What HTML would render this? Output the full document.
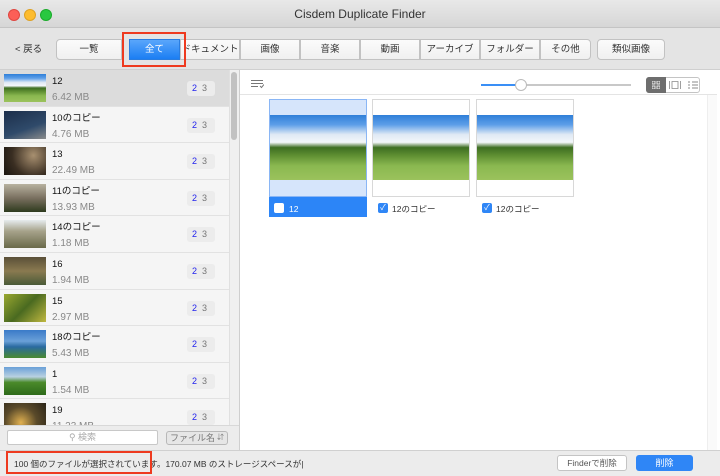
<!DOCTYPE html>
<html><head><meta charset="utf-8"><style>
*{margin:0;padding:0;box-sizing:border-box}
body{width:720px;height:476px;overflow:hidden;font-family:"Liberation Sans","Noto Sans CJK JP",sans-serif;background:#ececec;position:relative;font-size:10px;color:#222;line-height:12px}
.title{position:absolute;left:0;top:0;width:720px;height:28px;background:linear-gradient(#e8e8e8,#d6d6d6);border-bottom:1px solid #c4c4c4;text-align:center;line-height:28px;font-size:12px;color:#333}
.dot{position:absolute;top:9px;width:12px;height:12px;border-radius:6px}
.tool{position:absolute;top:28px;left:0;width:720px;height:42px;background:#e4e4e4;border-bottom:1px solid #cfcfcf}
.seg{position:absolute;top:11px;height:21px;background:linear-gradient(#fbfbfb,#f0f0f0);border:1px solid #c2c2c2;font-size:9.5px;display:flex;align-items:center;justify-content:center;white-space:nowrap;color:#333;line-height:12px}
.abs{position:absolute;white-space:nowrap}
.row{position:absolute;left:0;width:229px;height:36.6px;border-bottom:1px solid #e2e2e2;background:#f5f5f5}
.row .th{position:absolute;left:4px;top:4px;width:42px;height:28px}
.row .n{position:absolute;left:52px;top:6px;font-size:9.5px;color:#111;line-height:12px}
.row .s{position:absolute;left:52px;top:22px;font-size:10px;color:#888;line-height:12px}
.row .b{position:absolute;left:187px;top:11px;width:28px;height:15px;background:#ececec;border-radius:3px;font-size:9px;line-height:15px}
.land{background:linear-gradient(#2f7fd8 0%,#5d9ee8 15%,#dfe9f4 30%,#f3f6fa 42%,#3e6e22 50%,#5e8e32 62%,#8ab850 78%,#9bc25c 100%)}
.card{position:absolute;top:99px;width:98px;height:98px;border:1px solid #d8d8d8;background:#fff}
.card .img{position:absolute;left:0;top:15px;width:96px;height:65px}
.cb{position:absolute;width:10px;height:10px;border-radius:2px;background:#2f86f6;color:#fff;font-size:8px;line-height:10px;text-align:center}
</style></head><body>
<div class="title">Cisdem Duplicate Finder
<div class="dot" style="left:8px;background:#fc5f57;border:1px solid #df4640"></div>
<div class="dot" style="left:24px;background:#fdbc2e;border:1px solid #dea123"></div>
<div class="dot" style="left:40px;background:#29c840;border:1px solid #1aab2a"></div>
</div>
<div class="tool">
<div class="abs" style="left:15px;top:16px;font-size:9.5px;color:#333">&lt; 戻る</div>
<div class="seg" style="left:56px;width:66px;border-radius:4px 0 0 4px">一覧</div>
<div class="seg" style="left:129px;width:51px;background:linear-gradient(#5aa6fb,#1b7ef3);color:#fff;border-color:#2a7de0">全て</div>
<div class="seg" style="left:180px;width:60px">ドキュメント</div>
<div class="seg" style="left:240px;width:60px">画像</div>
<div class="seg" style="left:300px;width:60px">音楽</div>
<div class="seg" style="left:360px;width:60px">動画</div>
<div class="seg" style="left:420px;width:60px">アーカイブ</div>
<div class="seg" style="left:480px;width:60px">フォルダー</div>
<div class="seg" style="left:540px;width:51px;border-radius:0 4px 4px 0">その他</div>
<div class="seg" style="left:597px;width:68px;border-radius:4px">類似画像</div>
<div class="abs" style="left:122px;top:4px;width:64px;height:35px;border:2px solid #ee3a1f"></div>
</div>
<!-- list -->
<div class="abs" style="left:0;top:70px;width:229px;height:355px;background:#f5f5f5;overflow:hidden">
<div class="row" style="top:0;background:#dcdcdc"><div class="th land"></div><div class="n">12</div><div class="s">6.42 MB</div><div class="b"><span style="color:#2222ee;margin-left:5px">2</span><span style="color:#777;margin-left:5px">3</span></div></div>
<div class="row" style="top:36.6px"><div class="th" style="background:linear-gradient(160deg,#1c2e4a,#2f4a6a 60%,#8a8c8c)"></div><div class="n">10のコピー</div><div class="s">4.76 MB</div><div class="b"><span style="color:#2222ee;margin-left:5px">2</span><span style="color:#777;margin-left:5px">3</span></div></div>
<div class="row" style="top:73.2px"><div class="th" style="background:radial-gradient(circle at 70% 30%,#a89070,#3a2e22 60%,#1a1510)"></div><div class="n">13</div><div class="s">22.49 MB</div><div class="b"><span style="color:#2222ee;margin-left:5px">2</span><span style="color:#777;margin-left:5px">3</span></div></div>
<div class="row" style="top:109.8px"><div class="th" style="background:linear-gradient(#b8b2a0,#7a7060 50%,#2e3a1e)"></div><div class="n">11のコピー</div><div class="s">13.93 MB</div><div class="b"><span style="color:#2222ee;margin-left:5px">2</span><span style="color:#777;margin-left:5px">3</span></div></div>
<div class="row" style="top:146.4px"><div class="th" style="background:linear-gradient(#e6ebee,#a6a28a 40%,#6a6a4a)"></div><div class="n">14のコピー</div><div class="s">1.18 MB</div><div class="b"><span style="color:#2222ee;margin-left:5px">2</span><span style="color:#777;margin-left:5px">3</span></div></div>
<div class="row" style="top:183px"><div class="th" style="background:linear-gradient(#5a5038,#8a7a50 50%,#4a5a38)"></div><div class="n">16</div><div class="s">1.94 MB</div><div class="b"><span style="color:#2222ee;margin-left:5px">2</span><span style="color:#777;margin-left:5px">3</span></div></div>
<div class="row" style="top:219.6px"><div class="th" style="background:linear-gradient(135deg,#9aa830,#4a6a20 50%,#c0b840)"></div><div class="n">15</div><div class="s">2.97 MB</div><div class="b"><span style="color:#2222ee;margin-left:5px">2</span><span style="color:#777;margin-left:5px">3</span></div></div>
<div class="row" style="top:256.2px"><div class="th" style="background:linear-gradient(#3a7ac8,#6aa0d8 40%,#2a6aa0 60%,#4a8a30)"></div><div class="n">18のコピー</div><div class="s">5.43 MB</div><div class="b"><span style="color:#2222ee;margin-left:5px">2</span><span style="color:#777;margin-left:5px">3</span></div></div>
<div class="row" style="top:292.8px"><div class="th" style="background:linear-gradient(#6aa0d8,#b8d0e0 35%,#4a8a2a 55%,#2e6a1a)"></div><div class="n">1</div><div class="s">1.54 MB</div><div class="b"><span style="color:#2222ee;margin-left:5px">2</span><span style="color:#777;margin-left:5px">3</span></div></div>
<div class="row" style="top:329.4px"><div class="th" style="background:radial-gradient(circle at 40% 70%,#e0b050,#5a4a2a 50%,#2a2418)"></div><div class="n">19</div><div class="s">11.23 MB</div><div class="b"><span style="color:#2222ee;margin-left:5px">2</span><span style="color:#777;margin-left:5px">3</span></div></div>
</div>
<div class="abs" style="left:229px;top:70px;width:10px;height:355px;background:#f0f0f0;border-left:1px solid #e0e0e0"></div>
<div class="abs" style="left:231px;top:72px;width:6px;height:68px;background:#c2c2c2;border-radius:3px"></div>
<div class="abs" style="left:239px;top:70px;width:1px;height:380px;background:#cfcfcf"></div>
<!-- search -->
<div class="abs" style="left:0;top:425px;width:239px;height:25px;background:#ececec;border-top:1px solid #d8d8d8"></div>
<div class="abs" style="left:7px;top:430px;width:151px;height:15px;background:#fff;border:1px solid #c8c8c8;border-radius:2px;text-align:center;font-size:9px;color:#aaa;line-height:13px">&#9906; 検索</div>
<div class="abs" style="left:166px;top:431px;width:62px;height:14px;background:#e6e6e6;border:1px solid #b8b8b8;border-radius:3px;font-size:9px;color:#777;line-height:12px;padding-left:3px">ファイル名 <span style="font-size:7px;float:right;margin-right:3px">&#8693;</span></div>
<!-- right pane -->
<div class="abs" style="left:240px;top:70px;width:480px;height:380px;background:#fff"></div>
<div class="abs" style="left:240px;top:94px;width:477px;height:1px;background:#e4e4e4"></div>
<div class="abs" style="left:707px;top:95px;width:10px;height:355px;background:#fafafa;border-left:1px solid #eee"></div>
<svg class="abs" style="left:251px;top:79px" width="13" height="10"><path d="M0 1.5H12M0 4.5H12M0 7.5H7" stroke="#777" stroke-width="1"/><path d="M9 7l1.5 1.5L13 5.5" stroke="#777" fill="none"/></svg>
<div class="abs" style="left:481px;top:84px;width:40px;height:2px;background:#3a8ff6"></div>
<div class="abs" style="left:521px;top:84px;width:110px;height:2px;background:#c8c8c8"></div>
<div class="abs" style="left:515px;top:79px;width:12px;height:12px;border-radius:6px;background:#fff;border:1px solid #bbb"></div>
<div class="abs" style="left:646px;top:77px;width:54px;height:16px;border:1px solid #c4c4c4;border-radius:3px;background:#fff"></div>
<div class="abs" style="left:646px;top:77px;width:20px;height:16px;background:#6e6e6e;border-radius:3px 0 0 3px"></div>
<svg class="abs" style="left:652px;top:81px" width="8" height="8"><rect x="0" y="0" width="3" height="3" fill="none" stroke="#fff" stroke-width=".8"/><rect x="5" y="0" width="3" height="3" fill="none" stroke="#fff" stroke-width=".8"/><rect x="0" y="5" width="3" height="3" fill="none" stroke="#fff" stroke-width=".8"/><rect x="5" y="5" width="3" height="3" fill="none" stroke="#fff" stroke-width=".8"/></svg>
<svg class="abs" style="left:669px;top:81px" width="12" height="8"><path d="M.5 0V8M11.5 0V8M3 .5H9V7.5H3Z" stroke="#888" fill="none" stroke-width=".8"/></svg>
<svg class="abs" style="left:688px;top:81px" width="10" height="8"><path d="M0 1H2M4 1H10M0 4H2M4 4H10M0 7H2M4 7H10" stroke="#888" stroke-width=".9"/></svg>
<!-- cards -->
<div class="card" style="left:269px;background:#d6e5fb;border-color:#8ab6f5"><div class="img land"></div></div>
<div class="abs" style="left:269px;top:197px;width:98px;height:20px;background:#2c85f7"></div>
<div class="abs" style="left:274px;top:203px;width:10px;height:10px;background:#fff;border-radius:2px"></div>
<div class="abs" style="left:289px;top:203px;font-size:8.5px;color:#fff">12</div>
<div class="card" style="left:372px"><div class="img land"></div></div>
<div class="cb" style="left:378px;top:203px">✓</div><div class="abs" style="left:392px;top:203px;font-size:8.5px;color:#333">12のコピー</div>
<div class="card" style="left:476px"><div class="img land"></div></div>
<div class="cb" style="left:482px;top:203px">✓</div><div class="abs" style="left:496px;top:203px;font-size:8.5px;color:#333">12のコピー</div>
<!-- bottom -->
<div class="abs" style="left:0;top:450px;width:720px;height:26px;background:#ececec;border-top:1px solid #d0d0d0"></div>
<div class="abs" style="left:14px;top:458px;font-size:8.5px;color:#333;white-space:nowrap">100 個のファイルが選択されています。170.07 MB のストレージスペースが|</div>
<div class="abs" style="left:6px;top:451px;width:146px;height:23px;border:2px solid #ee3a1f"></div>
<div class="abs" style="left:557px;top:455px;width:70px;height:16px;background:#fff;border:1px solid #c4c4c4;border-radius:3px;font-size:8.5px;color:#555;text-align:center;line-height:14px">Finderで削除</div>
<div class="abs" style="left:636px;top:455px;width:57px;height:16px;background:#2f86f6;border-radius:3px;font-size:9px;color:#fff;text-align:center;line-height:16px">削除</div>
</body></html>
